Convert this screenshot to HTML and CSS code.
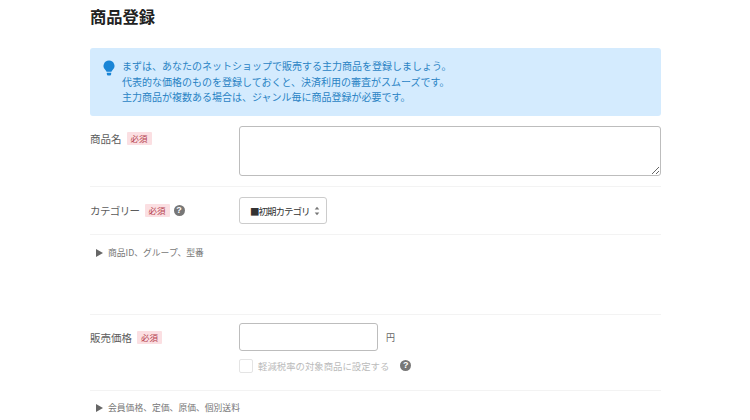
FILE: index.html
```html
<!DOCTYPE html>
<html lang="ja">
<head>
<meta charset="utf-8">
<title>商品登録</title>
<link rel="stylesheet" href="styles.css">
</head>
<body>
<main class="page">
  <h1 class="title">商品登録</h1>
  <div class="notice">
    <svg class="bulb" width="12" height="16" viewBox="0 0 12 16"><path d="M6 0.5a5.5 5.5 0 0 0-3.4 9.8c.5.4.8.9.9 1.5h5c.1-.6.4-1.100.9-1.500A5.500 5.500 0 0 0 6 .5z" fill="#1a85d6"/><path d="M3.800 12.800h4.400v1.200a1.500 1.500 0 0 1-1.500 1.500H5.300a1.500 1.500 0 0 1-1.500-1.500z" fill="#1a85d6"/></svg>
    <p class="notice-text">まずは、あなたのネットショップで販売する主力商品を登録しましょう。<br>代表的な価格のものを登録しておくと、決済利用の審査がスムーズです。<br>主力商品が複数ある場合は、ジャンル毎に商品登録が必要です。</p>
  </div>
  <div class="row row-name">
    <div class="label"><span>商品名</span><span class="req">必須</span></div>
    <textarea class="textarea"></textarea>
  </div>
  <div class="row row-cat">
    <div class="label label-mid"><span class="tight">カテゴリー</span><span class="req">必須</span><span class="help help-cat">?</span></div>
    <div class="select"><span class="select-text">■初期カテゴリ</span>
      <svg class="select-arrows" width="6" height="10" viewBox="0 0 6 10"><path d="M3 .8 5.300 3.600H.7zM3 9.200.7 6.400h4.600z" fill="#777"/></svg>
    </div>
  </div>
  <div class="row row-more-a"><span class="more"><span class="tri"></span>商品ID、グループ、型番</span></div>
  <div class="row row-price">
    <div class="label label-price"><span>販売価格</span><span class="req">必須</span></div>
    <div class="price-body">
      <div class="price-line"><input class="input" type="text"><span class="yen">円</span></div>
      <div class="check-line"><span class="checkbox"></span><span class="check-text">軽減税率の対象商品に設定する</span><span class="help help-tax">?</span></div>
    </div>
  </div>
  <div class="row-more-b"><span class="more"><span class="tri"></span>会員価格、定価、原価、個別送料</span></div>
</main>
</body>
</html>
```
FILE: styles.css
```css
html, body {
  margin: 0;
  height: 420px;
  overflow: hidden;
  background: #fff;
}
body {
  font-family: "Noto Sans CJK JP", "Noto Sans", sans-serif;
  color: #5c5c5c;
}
.page {
  width: 571px;
  margin-left: 90px;
}
.title {
  margin: 0;
  height: 48px;
  padding-top: 5px;
  box-sizing: border-box;
  font-size: 16.300px;
  line-height: 22px;
  font-weight: 700;
  color: #222;
}
.notice {
  display: flex;
  gap: 7px;
  height: 68px;
  box-sizing: border-box;
  padding: 10px 13px;
  background: #d4ebfe;
  border-radius: 3px;
}
.bulb {
  flex: none;
  margin-top: 2px;
}
.notice-text {
  margin: 0;
  font-size: 10px;
  line-height: 15.500px;
  color: #2a83c4;
}
.row {
  display: flex;
  align-items: flex-start;
  border-bottom: 1px solid #f3f3f3;
  box-sizing: border-box;
}
.row-name {
  height: 71px;
  padding-top: 10px;
}
.row-cat {
  height: 48px;
  padding-top: 10px;
}
.row-more-a {
  height: 80px;
  padding: 11px 0 0 6px;
}
.row-price {
  height: 76px;
  padding-top: 8px;
}
.row-more-b {
  padding: 10px 0 0 6px;
}
.label {
  width: 149px;
  flex: none;
  display: flex;
  align-items: center;
  height: 25px;
  font-size: 10.500px;
}
.label-mid {
  height: 27px;
}
.label-price {
  height: 28px;
}
.tight {
  letter-spacing: -0.600px;
}
.req {
  margin-left: 5px;
  padding: 0 4px;
  height: 13px;
  line-height: 13px;
  font-size: 8.500px;
  color: #b5424f;
  background: #fbdfe2;
  border-radius: 1px;
}
.help {
  width: 11px;
  height: 11px;
  border-radius: 50%;
  background: #777;
  color: #fff;
  font-size: 9px;
  line-height: 11px;
  font-weight: 700;
  text-align: center;
  font-family: "Liberation Sans", sans-serif;
}
.help-cat {
  margin-left: 4px;
}
.help-tax {
  margin-left: 11px;
}
.textarea {
  display: block;
  width: 422px;
  height: 50px;
  box-sizing: border-box;
  margin: 0;
  border: 1px solid #bdbdbd;
  border-radius: 3px;
  background: #fff;
  outline: none;
}
.select {
  display: flex;
  align-items: center;
  justify-content: space-between;
  width: 88px;
  height: 27px;
  box-sizing: border-box;
  padding: 0 6px 0 10px;
  border: 1px solid #ccc;
  border-radius: 3px;
  font-size: 9.500px;
  color: #333;
}
.select-text {
  white-space: nowrap;
  letter-spacing: -1px;
}
.select-arrows {
  flex: none;
}
.more {
  display: flex;
  align-items: center;
  margin-left: 0;
  font-size: 8.800px;
  line-height: 14px;
  color: #777;
}
.tri {
  width: 0;
  height: 0;
  margin-right: 5px;
  border-left: 7px solid #666;
  border-top: 4px solid transparent;
  border-bottom: 4px solid transparent;
}
.price-line {
  display: flex;
  align-items: center;
  height: 28px;
}
.input {
  width: 139px;
  height: 28px;
  box-sizing: border-box;
  margin: 0;
  border: 1px solid #bdbdbd;
  border-radius: 3px;
  outline: none;
}
.yen {
  margin-left: 8px;
  font-size: 9px;
  color: #666;
}
.check-line {
  display: flex;
  align-items: center;
  height: 15px;
  margin-top: 7px;
}
.checkbox {
  width: 14px;
  height: 14px;
  box-sizing: border-box;
  border: 1px solid #e4e4e4;
  border-radius: 2px;
  margin-right: 5px;
}
.check-text {
  font-size: 9.400px;
  color: #bbb;
}
```
